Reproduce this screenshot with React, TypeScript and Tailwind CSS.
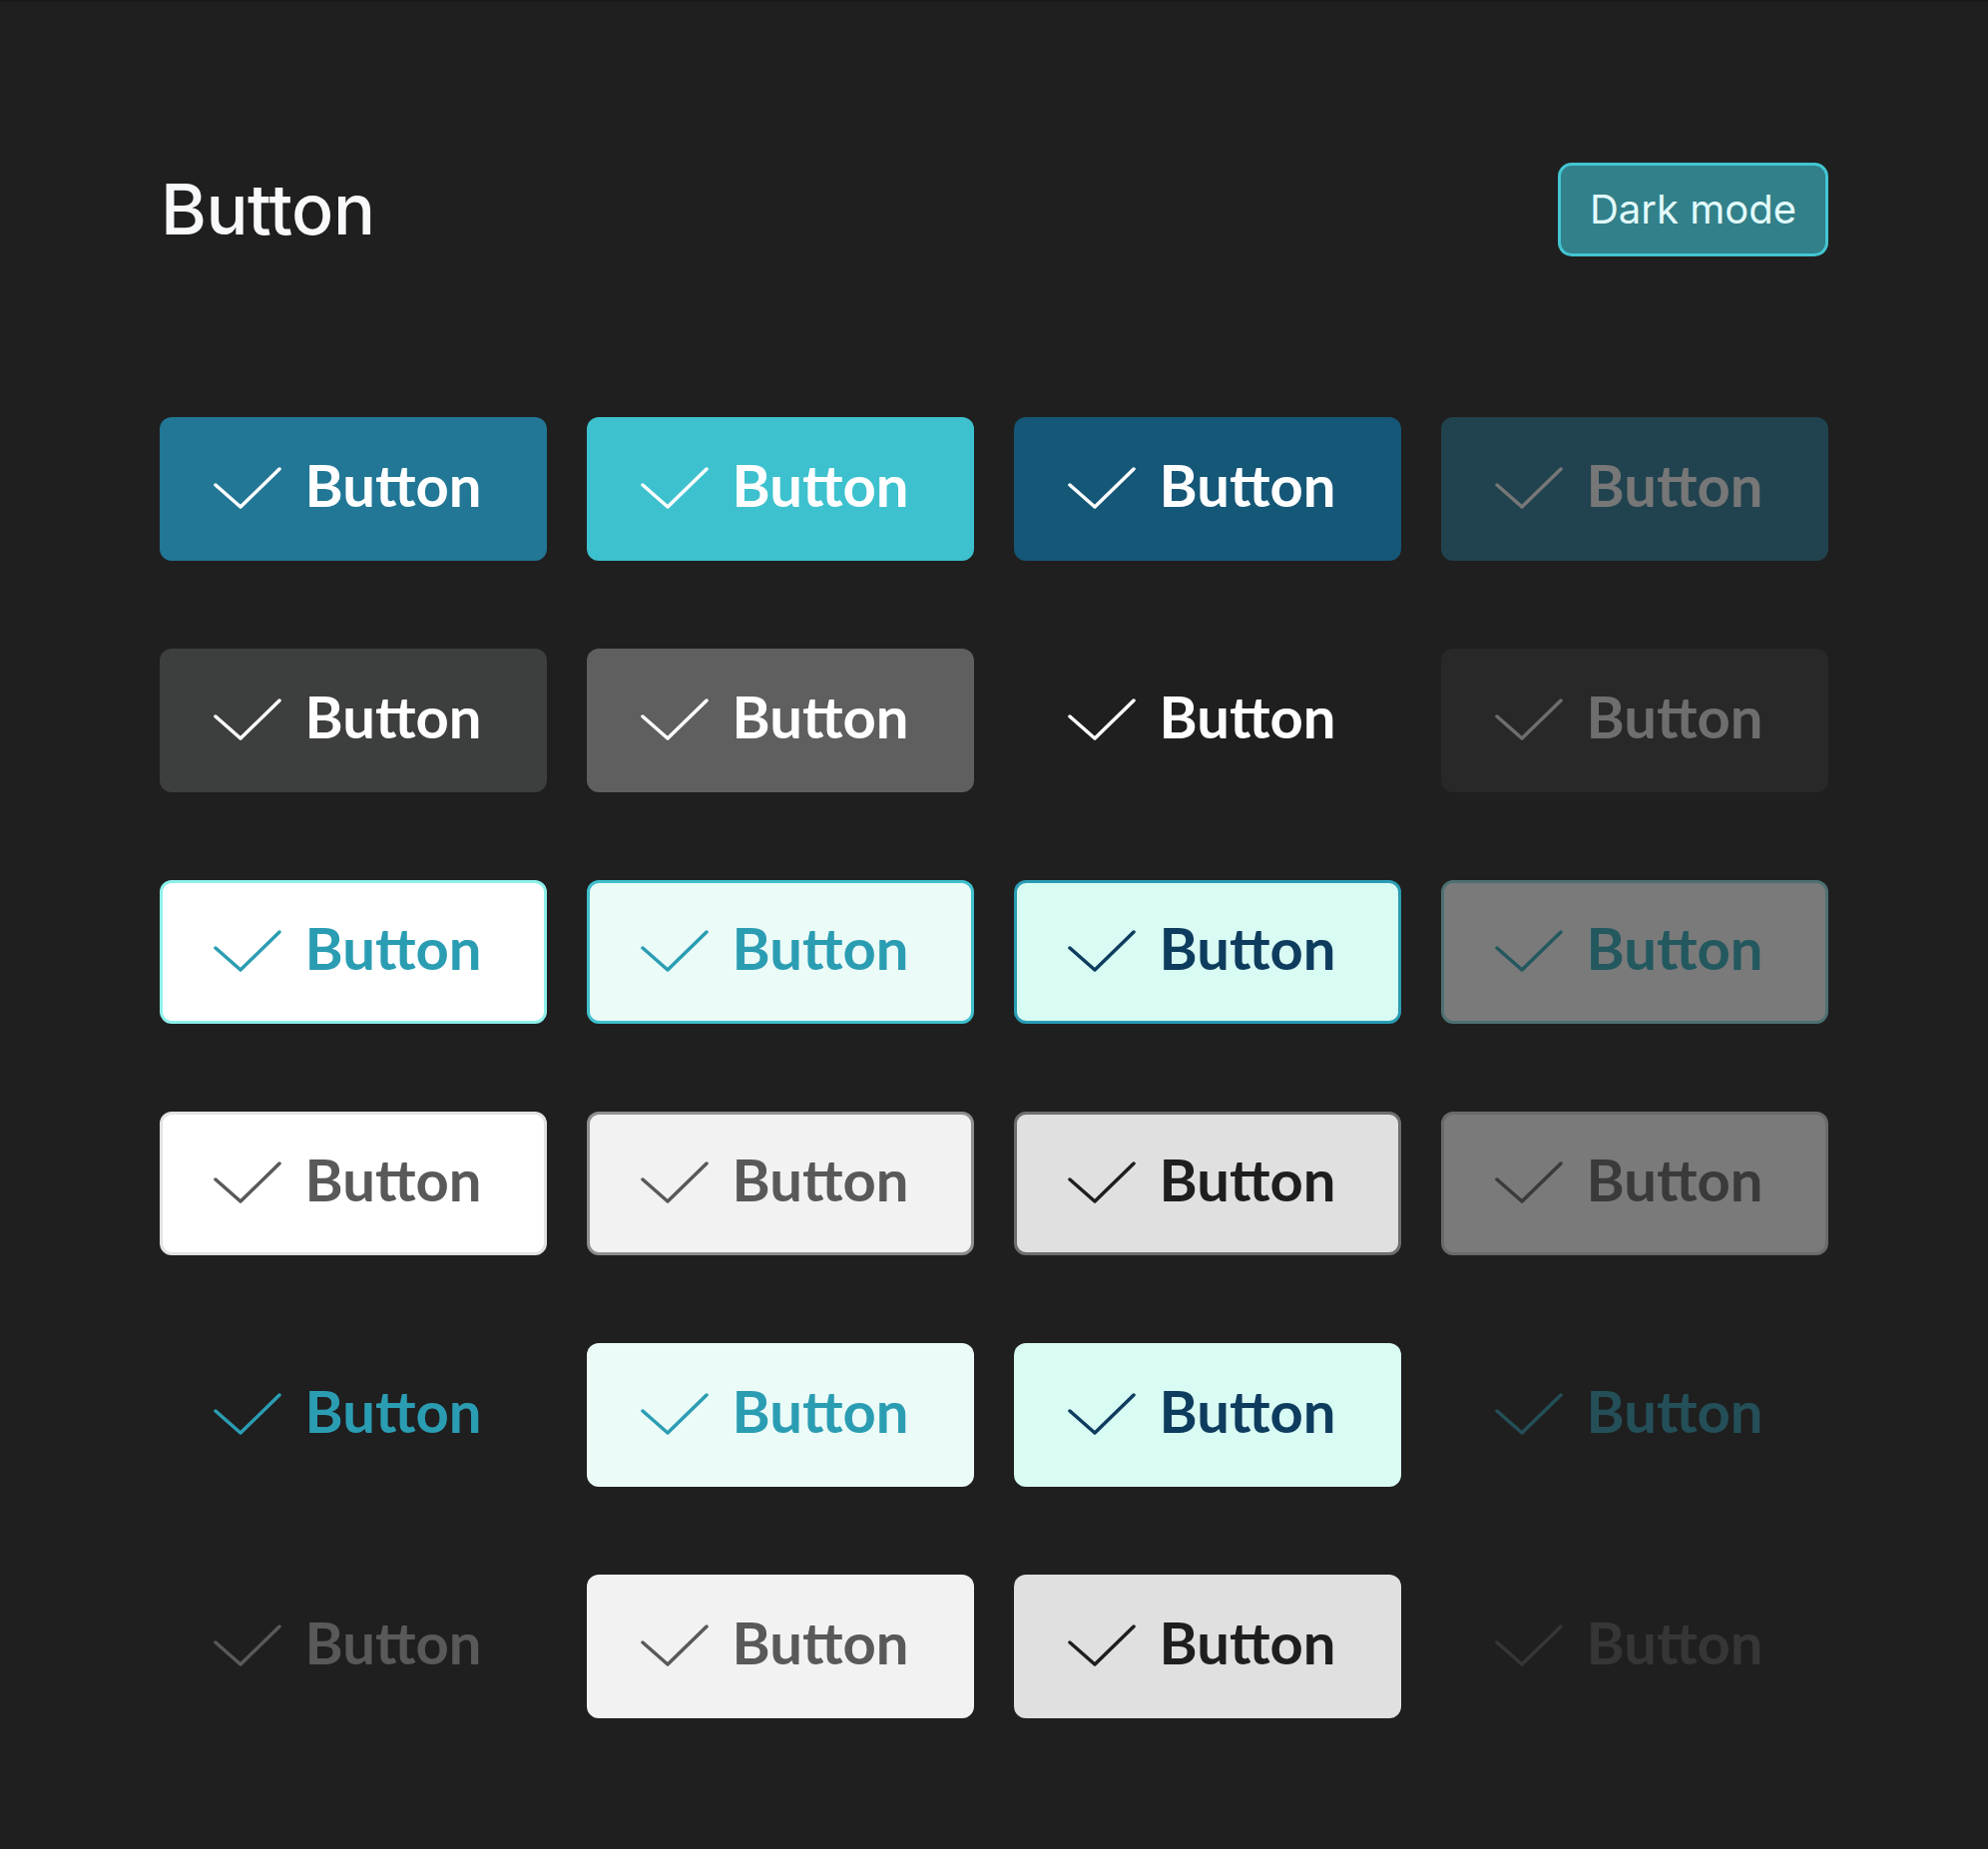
import React from 'react';

type Variant = { box: string; fg: string };

// six rows of four states each: default / hover / pressed / disabled
const rows: Variant[][] = [
  [
    { box: 'bg-[#217795]', fg: 'text-white' },
    { box: 'bg-[#3dc1ce]', fg: 'text-white' },
    { box: 'bg-[#155777]', fg: 'text-white' },
    { box: 'bg-[#21434f]', fg: 'text-[#777777]' },
  ],
  [
    { box: 'bg-[#3d3e3e]', fg: 'text-white' },
    { box: 'bg-[#5f5f5f]', fg: 'text-white' },
    { box: 'bg-transparent', fg: 'text-white' },
    { box: 'bg-[#282828]', fg: 'text-[#6e6e6e]' },
  ],
  [
    { box: 'bg-white border-[3px] border-[#8ef0ea]', fg: 'text-[#2b9db3]' },
    { box: 'bg-[#ebfbf8] border-[3px] border-[#3ec0cc]', fg: 'text-[#2b9db3]' },
    { box: 'bg-[#d8fbf3] border-[3px] border-[#2a9cb3]', fg: 'text-[#0e3c5e]' },
    { box: 'bg-[#7a7a7a] border-[3px] border-[#4e7070]', fg: 'text-[#23585f]' },
  ],
  [
    { box: 'bg-white border-[3px] border-[#e2e2e2]', fg: 'text-[#595959]' },
    { box: 'bg-[#f1f2f1] border-[3px] border-[#8e8e8e]', fg: 'text-[#595959]' },
    { box: 'bg-[#dfe0df] border-[3px] border-[#6e6e6e]', fg: 'text-[#1e1e1e]' },
    { box: 'bg-[#7a7a7a] border-[3px] border-[#6a6a6a]', fg: 'text-[#3a3a3a]' },
  ],
  [
    { box: 'bg-transparent', fg: 'text-[#2b9db3]' },
    { box: 'bg-[#ebfbf8]', fg: 'text-[#2b9db3]' },
    { box: 'bg-[#d8fbf3]', fg: 'text-[#0e3c5e]' },
    { box: 'bg-transparent', fg: 'text-[#244f58]' },
  ],
  [
    { box: 'bg-transparent', fg: 'text-[#595959]' },
    { box: 'bg-[#f1f2f1]', fg: 'text-[#595959]' },
    { box: 'bg-[#dfe0df]', fg: 'text-[#1e1e1e]' },
    { box: 'bg-transparent', fg: 'text-[#363636]' },
  ],
];

function Check() {
  return (
    <svg width="68" height="44" viewBox="0 0 68 44" fill="none" className="shrink-0">
      <path d="M2 18 L27 40 L66 2" stroke="currentColor" strokeWidth="3.5" strokeLinecap="round" strokeLinejoin="round" />
    </svg>
  );
}

function DemoButton({ v }: { v: Variant }) {
  return (
    <button
      className={`h-[144px] w-full rounded-[12px] box-border flex items-center justify-center gap-[24px] pr-[12px] ${v.box} ${v.fg}`}
    >
      <Check />
      <span className="font-['Lato',sans-serif] font-bold text-[58px] leading-none pb-[8px]">Button</span>
    </button>
  );
}

export default function App() {
  return (
    <div className="min-h-[1853px] bg-[#1f1f1f] border-t-2 border-[#1a1a1a] px-[160px] pt-[161px] pb-[130px]">
      {/* ===== HEADER ===== */}
      <header className="flex items-center justify-between">
        <h1 className="font-['Inter',sans-serif] font-medium text-[70px] leading-none tracking-[-0.5px] text-[#f8f9fb] ml-[1px]">
          Button
        </h1>
        <button className="h-[94px] w-[271px] rounded-[14px] border-[3px] border-[#42c6d2] bg-[#32808a] text-[#e2fbfc] font-['Inter',sans-serif] text-[40px] leading-none">
          Dark mode
        </button>
      </header>

      {/* ===== GRID ===== */}
      <main className="mt-[161px] grid grid-cols-4 gap-x-[40px] gap-y-[88px]">
        {rows.map((row, i) =>
          row.map((v, j) => <DemoButton key={`${i}-${j}`} v={v} />)
        )}
      </main>
    </div>
  );
}
